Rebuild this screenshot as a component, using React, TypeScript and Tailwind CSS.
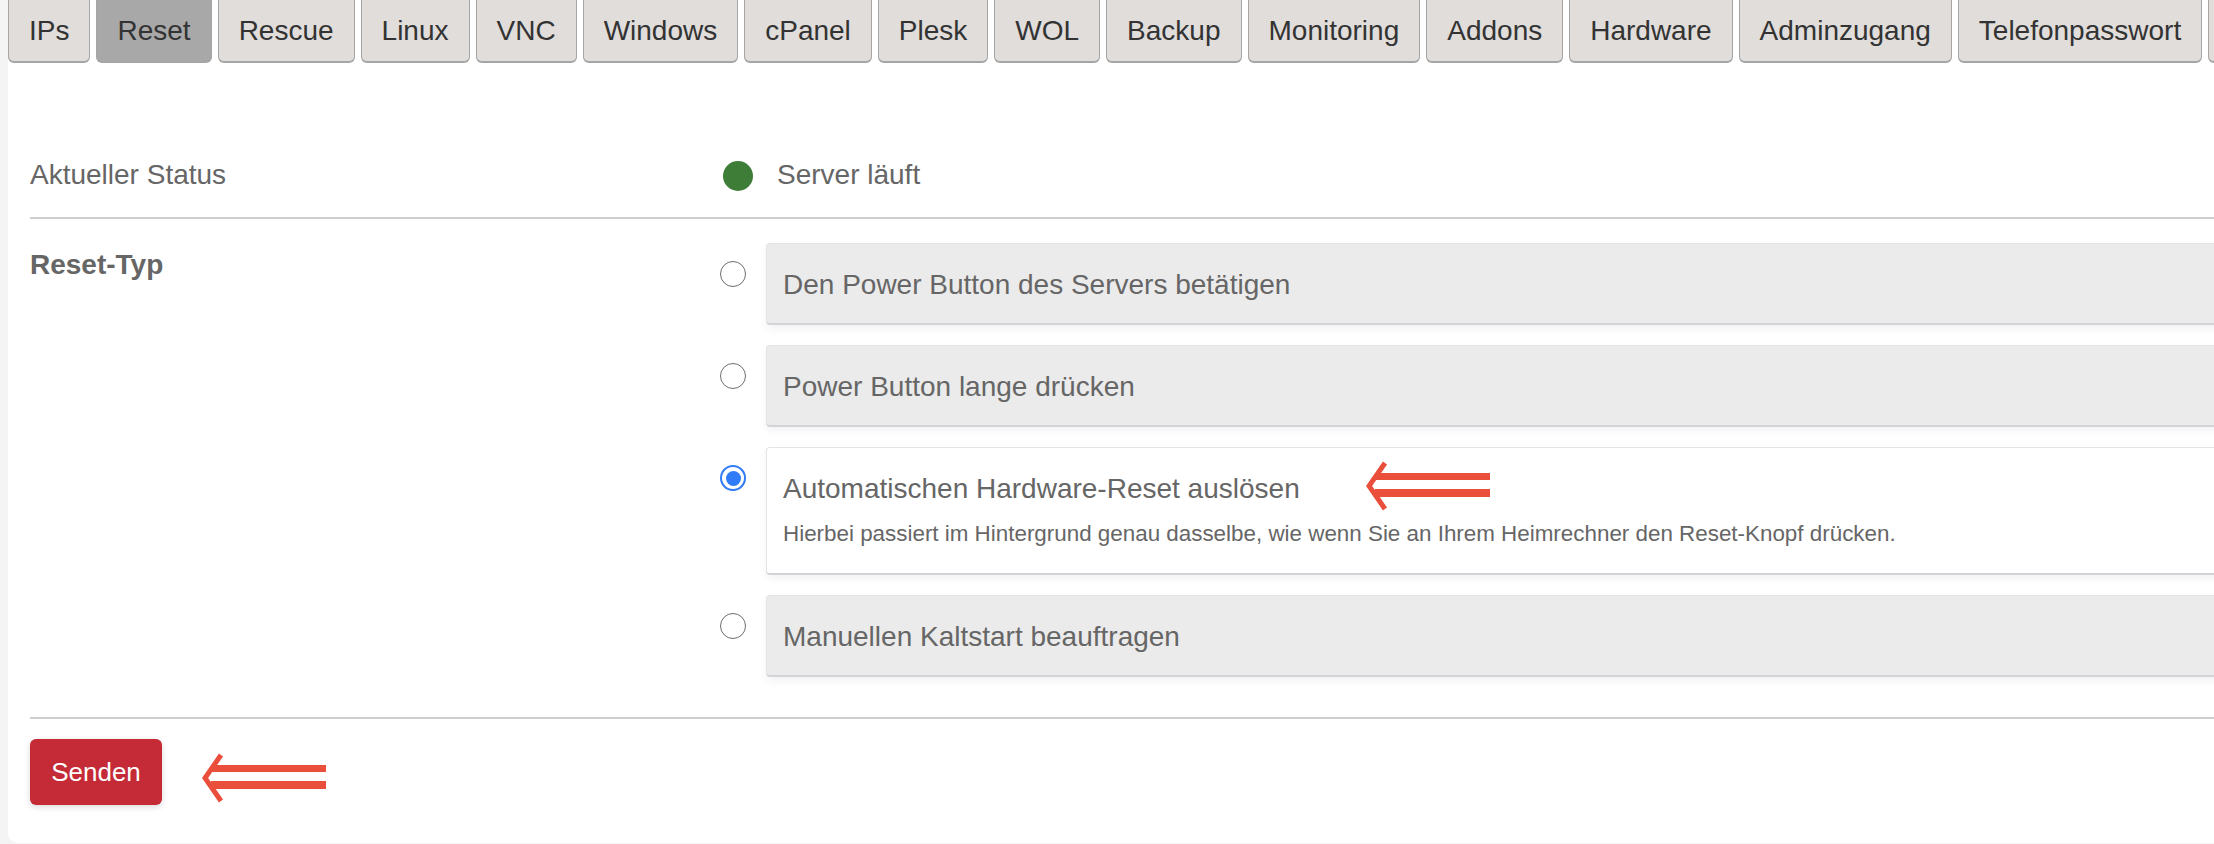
import React from 'react'

const tabs = [
  'IPs',
  'Reset',
  'Rescue',
  'Linux',
  'VNC',
  'Windows',
  'cPanel',
  'Plesk',
  'WOL',
  'Backup',
  'Monitoring',
  'Addons',
  'Hardware',
  'Adminzugang',
  'Telefonpasswort',
]

const options = [
  { id: 'power', label: 'Den Power Button des Servers betätigen' },
  { id: 'long', label: 'Power Button lange drücken' },
  {
    id: 'hw',
    label: 'Automatischen Hardware-Reset auslösen',
    desc: 'Hierbei passiert im Hintergrund genau dasselbe, wie wenn Sie an Ihrem Heimrechner den Reset-Knopf drücken.',
  },
  { id: 'manual', label: 'Manuellen Kaltstart beauftragen' },
]

function HintArrow({ className = '' }: { className?: string }) {
  return (
    <svg width="124" height="50" viewBox="0 0 124 50" className={className}>
      <polyline points="19,2 3,25 19,48" fill="none" stroke="#ea4f3c" strokeWidth="5" strokeLinejoin="miter" />
      <rect x="9" y="12" width="115" height="7" fill="#ea4f3c" />
      <rect x="9" y="28" width="115" height="8" fill="#ea4f3c" />
    </svg>
  )
}

function Radio({ checked }: { checked: boolean }) {
  if (checked) {
    return (
      <span className="mt-[18px] flex h-[26px] w-[26px] shrink-0 items-center justify-center rounded-full border-[2.5px] border-[#2f7cf6] bg-white">
        <span className="h-[15px] w-[15px] rounded-full bg-[#2f7cf6]" />
      </span>
    )
  }
  return <span className="mt-[18px] h-[26px] w-[26px] shrink-0 rounded-full border-[1.5px] border-[#6e6e6e] bg-white" />
}

export default function App() {
  const selected = 'hw'

  return (
    <div className="h-[844px] w-[2214px] overflow-hidden bg-[#f4f4f4] font-['Liberation_Sans',Arial,sans-serif]">
      <div className="ml-[8px] h-[843px] w-[2260px] rounded-bl-[10px] bg-white">
        <div className="flex h-[63px] gap-[6px]">
          {tabs.map((t) => (
            <div
              key={t}
              className={`flex h-[63px] shrink-0 items-center rounded-b-[6px] border-x border-b-2 border-[#a5a5a5] px-[20px] text-[28px] leading-[32px] text-[#333] ${
                t === 'Reset' ? 'bg-[#a8a8a8]' : 'bg-[#e0dddb]'
              }`}
            >
              {t}
            </div>
          ))}
          {/* next tab, cut off by the window edge */}
          <div className="h-[63px] w-[120px] shrink-0 rounded-b-[6px] border-x border-b-2 border-[#a5a5a5] bg-[#e0dddb]" />
        </div>

        <div className="pl-[22px] text-[28px] leading-[40px] text-[#666]">
          <div className="mt-[92px] flex h-[40px] items-center">
            <div className="w-[690px] shrink-0">Aktueller Status</div>
            <div className="flex items-center">
              <span className="ml-[3px] mt-[2px] h-[30px] w-[30px] rounded-full bg-[#3e7d38]" />
              <span className="ml-[24px]">Server läuft</span>
            </div>
          </div>

          <div className="mt-[22px] border-t-2 border-[#cdcdcd]" />

          <div className="flex pb-[40px] pt-[24px]">
            <div className="mt-[2px] w-[690px] shrink-0 font-bold">Reset-Typ</div>
            <div className="flex flex-1 flex-col gap-[20px]">
              {options.map((o) => {
                const on = o.id === selected
                return (
                  <label key={o.id} className="flex gap-[20px]">
                    <Radio checked={on} />
                    <div
                      className={`flex-1 rounded-[4px] border border-b-2 border-[#e3e3e8] border-b-[#d2d2d7] px-[16px] shadow-[0_4px_8px_rgba(0,0,0,0.05)] ${
                        on ? 'bg-white pb-[24px] pt-[21px]' : 'bg-[#ebebeb] pb-[18px] pt-[21px]'
                      }`}
                    >
                      <div className="flex h-[40px] items-start">
                        <span>{o.label}</span>
                        {on && <HintArrow className="-mt-[8px] ml-[66px] shrink-0" />}
                      </div>
                      {o.desc && <div className="mt-[10px] text-[22.4px] leading-[30px]">{o.desc}</div>}
                    </div>
                  </label>
                )
              })}
            </div>
          </div>

          <div className="border-t-2 border-[#cdcdcd]" />

          <div className="flex items-start pt-[20px]">
            <button className="flex h-[66px] w-[132px] items-center justify-center rounded-[6px] bg-[#c42b36] text-[26px] text-white shadow-[0_2px_6px_rgba(0,0,0,0.15)]">
              Senden
            </button>
            <HintArrow className="ml-[40px] mt-[14px]" />
          </div>
        </div>
      </div>
    </div>
  )
}
